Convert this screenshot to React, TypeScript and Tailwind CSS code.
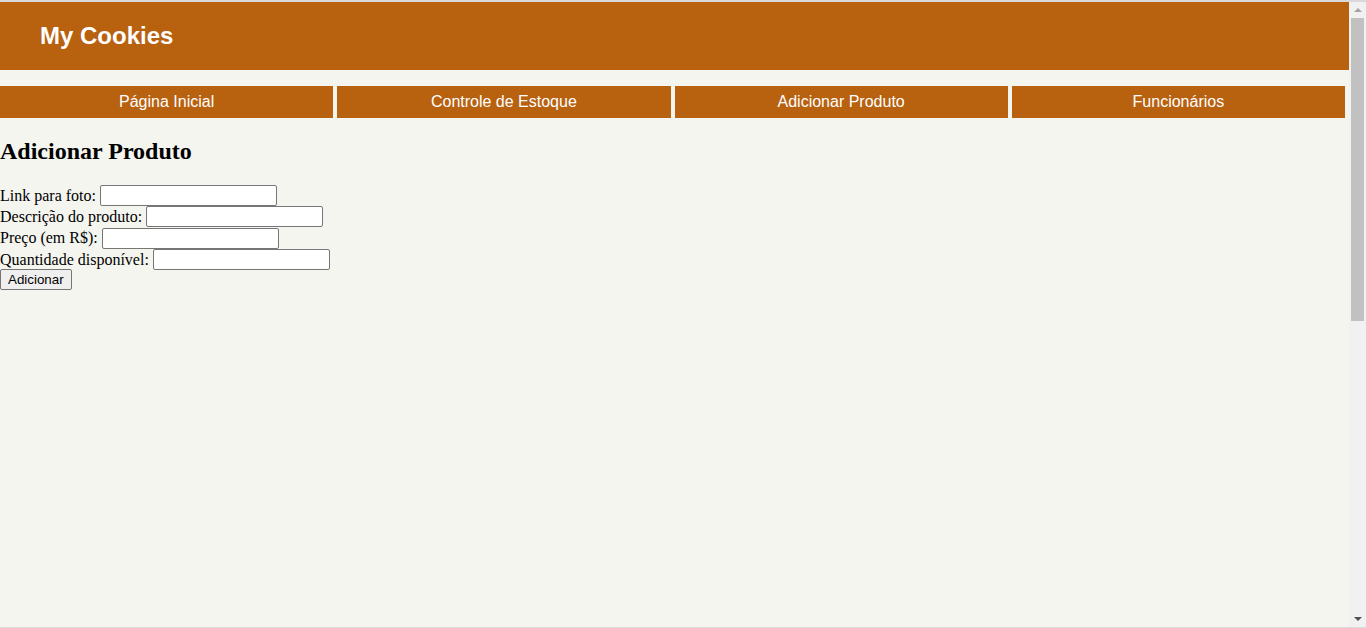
const navItems = ['Página Inicial', 'Controle de Estoque', 'Adicionar Produto', 'Funcionários']

const fields = ['Link para foto:', 'Descrição do produto:', 'Preço (em R$):', 'Quantidade disponível:']

// barra de rolagem falsa, como a do navegador na captura
function Scrollbar() {
  return (
    <div className="flex w-[17px] shrink-0 flex-col items-center bg-[#f1f1f1]">
      <div className="flex h-[16px] w-full items-center justify-center">
        <div className="h-0 w-0 border-x-[4px] border-b-[4px] border-x-transparent border-b-[#a3a3a3]" />
      </div>
      <div className="h-[303px] w-[13px] bg-[#c1c1c1]" />
      <div className="flex-1" />
      <div className="flex h-[16px] w-full items-center justify-center">
        <div className="h-0 w-0 border-x-[4px] border-t-[4px] border-x-transparent border-t-[#505050]" />
      </div>
    </div>
  )
}

export default function App() {
  return (
    <div className="flex h-[628px] w-full overflow-hidden border-t-2 border-b border-[#d9d9d9] bg-[#f5f5f0]">
      <div className="w-[1349px] shrink-0 font-['Liberation_Serif',serif] text-base text-black">
        <header className="flex h-[68px] items-center bg-[#b8610f] pl-10">
          <h1 className="font-['Liberation_Sans',Arial,sans-serif] text-2xl font-bold text-white">My Cookies</h1>
        </header>

        <nav className="mt-4 flex h-8 gap-1 pr-1">
          {navItems.map((n) => (
            <a
              key={n}
              href="#"
              className="flex flex-1 items-center justify-center bg-[#b8610f] font-['Liberation_Sans',Arial,sans-serif] text-base text-white"
            >
              {n}
            </a>
          ))}
        </nav>

        <h2 className="mt-[20px] mb-[20px] text-2xl leading-[27px] font-bold">Adicionar Produto</h2>

        <form onSubmit={(e) => e.preventDefault()}>
          {fields.map((f) => (
            <div key={f} className="flex h-[21.3px] items-center">
              <label className="whitespace-pre">{f} </label>
              <input
                type="text"
                className="h-[21px] w-[177px] rounded-[2px] border border-[#767676] bg-white px-[2px] text-[13.33px]"
              />
            </div>
          ))}
          <button
            type="submit"
            className="-mt-[1.5px] block h-[21px] rounded-[2px] border border-[#767676] bg-[#efefef] px-[7px] font-['Liberation_Sans',Arial,sans-serif] text-[13.33px] leading-none text-black"
          >
            Adicionar
          </button>
        </form>
      </div>
      <Scrollbar />
    </div>
  )
}
